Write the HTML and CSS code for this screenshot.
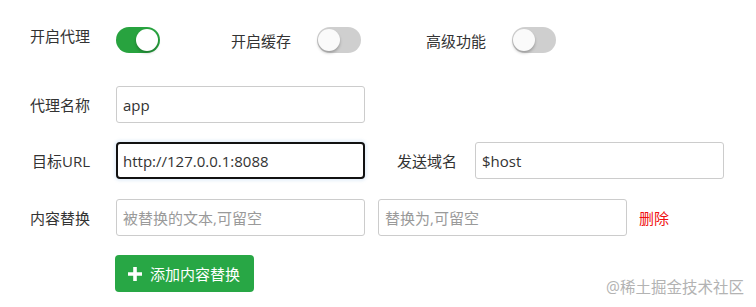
FILE: index.html
```html
<!DOCTYPE html>
<html lang="zh-CN">
<head>
<meta charset="utf-8">
<title>代理设置</title>
<link rel="stylesheet" href="styles.css">
</head>
<body>
<div class="page">
  <div class="row row-switches">
    <span class="label label-top">开启代理</span>
    <span class="switch on"><span class="knob"></span></span>
    <span class="label-inline g2">开启缓存</span>
    <span class="switch"><span class="knob"></span></span>
    <span class="label-inline g3">高级功能</span>
    <span class="switch"><span class="knob"></span></span>
  </div>
  <div class="row r2">
    <span class="label">代理名称</span>
    <input class="input" type="text" value="app">
  </div>
  <div class="row r3">
    <span class="label">目标URL</span>
    <input class="input focus" type="text" value="http://127.0.0.1:8088">
    <span class="label-inline host-label">发送域名</span>
    <input class="input" type="text" value="$host">
  </div>
  <div class="row r4">
    <span class="label">内容替换</span>
    <input class="input" type="text" placeholder="被替换的文本,可留空">
    <input class="input second" type="text" placeholder="替换为,可留空">
    <span class="delete">删除</span>
  </div>
  <div class="row r5">
    <span class="label"></span>
    <button class="btn" type="button">
      <svg class="plus" width="14" height="14" viewBox="0 0 14 14"><path d="M5.2 0h3.6v5.2H14v3.6H8.8V14H5.2V8.8H0V5.2h5.2z" fill="#fff"/></svg>
      <span>添加内容替换</span>
    </button>
  </div>
  <div class="watermark">@稀土掘金技术社区</div>
</div>
</body>
</html>
```
FILE: styles.css
```css
html, body {
  margin: 0;
  padding: 0;
  background: #fff;
}
body {
  font-family: "Open Sans", "Noto Sans CJK SC", sans-serif;
  font-size: 15px;
  color: #333;
}
.page {
  position: relative;
  width: 756px;
  height: 307px;
  padding-top: 27px;
  box-sizing: border-box;
}
.row {
  display: flex;
  align-items: center;
}
.row-switches {
  height: 26px;
}
.label {
  width: 90px;
  margin-right: 26px;
  text-align: right;
  line-height: 20px;
  flex: none;
}
.label-top {
  align-self: flex-start;
  margin-top: -1px;
}
.label-inline {
  line-height: 20px;
  margin-right: 26px;
  padding-top: 2px;
}
.g2 { margin-left: 71px; }
.g3 { margin-left: 65px; }
.switch {
  position: relative;
  width: 44px;
  height: 26px;
  border-radius: 13px;
  background: #cfcfcf;
  flex: none;
}
.switch .knob {
  position: absolute;
  top: 2px;
  left: 1px;
  width: 22px;
  height: 22px;
  border-radius: 50%;
  background: #fafafa;
  box-shadow: 0 2px 3px rgba(0,0,0,0.25);
}
.switch.on {
  background: #28a33f;
}
.switch.on .knob {
  left: 20px;
  background: #fff;
}
.r2 { margin-top: 33px; }
.r3 { margin-top: 19px; }
.r4 { margin-top: 20px; }
.r5 { margin-top: 19px; }
.input {
  width: 249px;
  height: 37px;
  box-sizing: border-box;
  border: 1px solid #ccc;
  border-radius: 3px;
  padding: 0 6px;
  font-family: "Open Sans", "Noto Sans CJK SC", sans-serif;
  font-size: 15px;
  color: #333;
  background: #fff;
  outline: none;
  flex: none;
}
.input::placeholder {
  color: #9a9a9a;
}
.input.focus {
  border: 2px solid #111;
  border-radius: 4px;
  padding: 0 5px;
  box-shadow: 0 0 3px 2px rgba(120,170,230,0.18);
}
.host-label {
  margin-left: 32px;
  margin-right: 18px;
  padding-top: 0;
}
.input.second {
  margin-left: 13px;
}
.delete {
  margin-left: 12px;
  color: #f01010;
  line-height: 20px;
}
.btn {
  display: flex;
  align-items: center;
  gap: 8px;
  height: 37px;
  padding: 0 14px 0 13px;
  border: none;
  border-radius: 4px;
  background: #28a745;
  color: #fff;
  font-family: "Open Sans", "Noto Sans CJK SC", sans-serif;
  font-size: 15px;
  margin-left: -1px;
}
.plus { flex: none; }
.watermark {
  position: absolute;
  right: 12px;
  bottom: 10px;
  font-size: 15.5px;
  color: #b3b3b3;
  line-height: 20px;
}
```
